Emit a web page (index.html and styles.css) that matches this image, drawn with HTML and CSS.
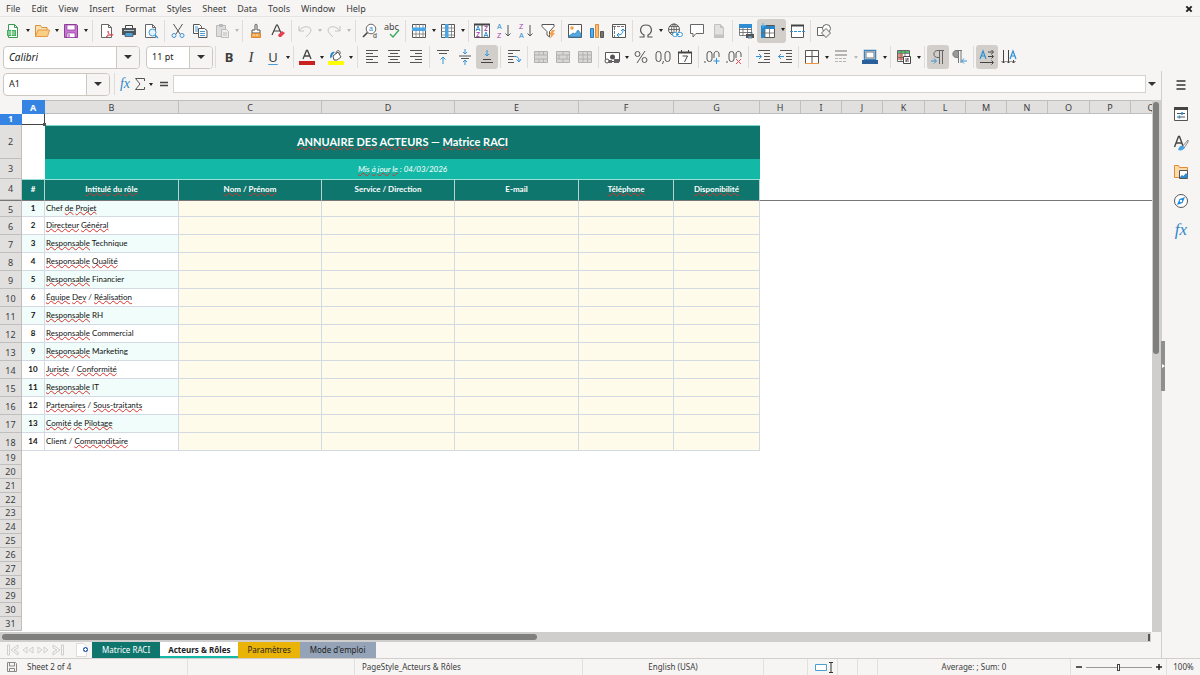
FILE: index.html
```html
<!DOCTYPE html>
<html lang="fr">
<head>
<meta charset="utf-8">
<title>Matrice RACI</title>
<link rel="stylesheet" href="styles.css">
</head>
<body>
<header class="menubar">
  <nav class="menus">
    <button>File</button><button>Edit</button><button>View</button><button>Insert</button><button>Format</button><button>Styles</button><button>Sheet</button><button>Data</button><button>Tools</button><button>Window</button><button>Help</button>
  </nav>
  <button class="close" aria-label="Close"><svg viewBox="0 0 6 6"><path d="M1 1l4 4M5 1L1 5" stroke="#222" stroke-width="1.5"/></svg></button>
</header>

<div class="toolbar standard">
  <button class="tool" aria-label="New"><svg viewBox="0 0 16 16"><path d="M3.5 1.5h6l3 3v10h-9z" fill="#fff" stroke="#3a9a52"/><path d="M9.500 1.500v3h3" stroke="#3a9a52"/><path d="M2 7h9v6H2z" fill="#43b05f"/><path d="M3 9h7M3 11h7M6.500 7v6" stroke="#fff" stroke-width=".7"/></svg></button><button class="arrow" aria-label="New options"></button>
  <button class="tool" aria-label="Open"><svg viewBox="0 0 16 16"><path d="M1.500 13.500v-11h5l1.500 2h5v3" fill="#fbe0b0" stroke="#d8913d"/><path d="M1.500 13.500l2.500-6.500h11.500l-2 6.500z" fill="#fbce85" stroke="#e39a42"/></svg></button><button class="arrow" aria-label="Open options"></button>
  <button class="tool" aria-label="Save"><svg viewBox="0 0 16 16"><path d="M1.500 1.500h12l1 1v12h-13z" fill="#c877d0" stroke="#8f3b9c"/><path d="M4 2h8v5H4zM4 10h8v4.500H4z" fill="#fff" stroke="#8f3b9c" stroke-width=".7"/><path d="M6 11v3" stroke="#8f3b9c"/></svg></button><button class="arrow" aria-label="Save options"></button>
  <i class="sep wide"></i>
  <button class="tool" aria-label="Export as PDF"><svg viewBox="0 0 16 16"><path d="M2.500 1.500h7l3 3v10h-10z" fill="#fff" stroke="#666"/><path d="M9.500 1.500v3h3" stroke="#666"/><path d="M7 14c3-2 3-6 2-6s1 5 5 4c1-1-4 0-7 2z" stroke="#dc3d4b" stroke-width=".9"/></svg></button>
  <button class="tool" aria-label="Print"><svg viewBox="0 0 16 16"><path d="M4.500 5V2.500h7V5" fill="#fff" stroke="#444"/><path d="M1 5h14v7H1z" fill="#555"/><path d="M3 7.500h10" stroke="#a9d1ed"/><path d="M4 9.500h8v4H4z" fill="#4d9fda" stroke="#444" stroke-width=".7"/></svg></button>
  <button class="tool" aria-label="Print preview"><svg viewBox="0 0 16 16"><path d="M2.500 1.500h7l3 3v10h-10z" fill="#fff" stroke="#666"/><path d="M9.500 1.500v3h3" stroke="#666"/><circle cx="9.500" cy="9.500" r="3.500" fill="#e6f3fc" stroke="#429bd8"/><path d="M12 12l3 3" stroke="#429bd8" stroke-width="1.400"/></svg></button>
  <i class="sep"></i>
  <button class="tool" aria-label="Cut"><svg viewBox="0 0 16 16"><path d="M3.500 1l6.500 10M12.500 1L6 11" stroke="#555"/><circle cx="4" cy="12.500" r="2" stroke="#3f93d5"/><circle cx="12" cy="12.500" r="2" stroke="#3f93d5"/></svg></button>
  <button class="tool" aria-label="Copy"><svg viewBox="0 0 16 16"><path d="M1.500 1.500h6l2 2v7h-8z" fill="#fff" stroke="#555"/><path d="M3 4h3M3 6h3M3 8h3" stroke="#4a9bd5"/><path d="M6.500 5.500h6l2.500 2v7H6.500z" fill="#fff" stroke="#555"/><path d="M8 8.500h5M8 10.500h5M8 12.500h5" stroke="#4a9bd5"/></svg></button>
  <button class="tool off" aria-label="Paste" disabled><svg viewBox="0 0 16 16"><path d="M2.500 2.500h9v11h-9z" fill="#ddd" stroke="#bbb"/><path d="M5 1h4v3H5z" fill="#bbb"/><path d="M7.500 6.500h5l2 2v6h-7z" fill="#eee" stroke="#bbb"/><path d="M9 10h4M9 12h4" stroke="#bbb"/></svg></button><button class="arrow off" aria-label="Paste options" disabled></button>
  <i class="sep"></i>
  <button class="tool" aria-label="Clone formatting"><svg viewBox="0 0 16 16"><path d="M7 7V2c0-1 2-1 2 0v5h3v3H4V7z" fill="#fff" stroke="#555"/><path d="M3.500 10.500h9v4h-9z" fill="#f6a651" stroke="#dc8733"/><path d="M6 11v2M9 11v2" stroke="#fff" stroke-width=".7"/></svg></button>
  <button class="tool" aria-label="Clear formatting"><svg viewBox="0 0 16 16"><path d="M2 12L6.500 2h1L11 10M4 8h6" stroke="#444" stroke-width="1.200"/><path d="M8 12l4-4 3 2-4 4H9z" fill="#e4404f"/></svg></button>
  <i class="sep"></i>
  <button class="tool off" aria-label="Undo" disabled><svg viewBox="0 0 16 16"><path d="M2 3v5h5M2 8c3-5 11-6 12-1 0 2-2 4-5 7" stroke="#c4c3c2"/></svg></button><button class="arrow off" aria-label="Undo options" disabled></button>
  <button class="tool off" aria-label="Redo" disabled><svg viewBox="0 0 16 16"><path d="M14 3v5H9M14 8C11 3 3 2 2 7c0 2 2 4 5 7" stroke="#c4c3c2"/></svg></button><button class="arrow off" aria-label="Redo options" disabled></button>
  <i class="sep wide"></i>
  <button class="tool" aria-label="Find and replace"><svg viewBox="0 0 16 16"><circle cx="9" cy="6" r="4.800" fill="#fff" stroke="#666"/><path d="M5.500 9.500L1 14" stroke="#444" stroke-width="1.600"/><text x="7" y="8" font-size="7" fill="#278bd1">a</text><text x="11" y="15" font-size="7" fill="#333">d</text></svg></button>
  <button class="tool" aria-label="Spelling"><svg class="spell" viewBox="0 0 16 16"><text x="0" y="7" font-size="9" fill="#444">abc</text><path d="M6 11l3 3 6-7" stroke="#35a85b" stroke-width="1.300"/></svg></button>
  <i class="sep"></i>
  <button class="tool" aria-label="Row"><svg viewBox="0 0 16 16"><path d="M1.500 1.500h13v13h-13z" fill="#fff" stroke="#555"/><path d="M1.500 11h13M5 1v14M8.500 1v14M12 1v14" stroke="#777" stroke-width=".8"/><path d="M1 4.500h14v3.500H1z" fill="#4ca5e5"/></svg></button><button class="arrow" aria-label="Row options"></button>
  <button class="tool" aria-label="Column"><svg viewBox="0 0 16 16"><path d="M1.500 1.500h13v13h-13z" fill="#fff" stroke="#555"/><path d="M1 5h14M1 8.500h14M1 12h14M11.500 1v14" stroke="#777" stroke-width=".8"/><path d="M5 1h3.500v14H5z" fill="#4ca5e5"/></svg></button><button class="arrow" aria-label="Column options"></button>
  <i class="sep"></i>
  <button class="tool" aria-label="Sort"><svg viewBox="0 0 16 16"><path d="M.5 1.500h15v13H.5zM8 1v14" fill="#fff" stroke="#555"/><path d="M0 1.500h16" stroke="#444" stroke-width="2"/><path d="M2 8l2-5 2 5M2.500 6.500h3M10 14l2-5 2 5M10.500 12.500h3" stroke="#258bd2" stroke-width=".9"/><path d="M2.500 9.500h3L2.500 13.500h3M10.500 3.500h3l-3 4h3" stroke="#a43aae" stroke-width=".9"/></svg></button>
  <button class="tool" aria-label="Sort ascending"><svg viewBox="0 0 16 16"><text x="1" y="6" font-size="7" fill="#258bd2">A</text><text x="1" y="15" font-size="7" fill="#a43aae">Z</text><path d="M12 2v11M9.500 10.500L12 13l2.500-2.500" stroke="#555"/></svg></button>
  <button class="tool" aria-label="Sort descending"><svg viewBox="0 0 16 16"><text x="1" y="6" font-size="7" fill="#a43aae">Z</text><text x="1" y="15" font-size="7" fill="#258bd2">A</text><path d="M12 2v11M9.500 10.500L12 13l2.500-2.500" stroke="#555"/></svg></button>
  <button class="tool" aria-label="AutoFilter"><svg viewBox="0 0 16 16"><path d="M2 1.500h12v2L9.500 8.500V14l-2.500-2V8.500L2 3.500z" fill="#fff" stroke="#555"/><path d="M12 7l-3 5h2l-1 4 5-6h-2l2-3z" fill="#f5a04a"/></svg></button>
  <i class="sep"></i>
  <button class="tool" aria-label="Insert image"><svg viewBox="0 0 16 16"><path d="M1.500 1.500h13v13h-13z" fill="#fff" stroke="#555"/><circle cx="5" cy="5" r="1.800" fill="#f4a151"/><path d="M2 13l4-3 2 1 3-4 3 4v3H2z" fill="#56a9df" stroke="#2f83bd" stroke-width=".8"/></svg></button>
  <button class="tool" aria-label="Insert chart"><svg viewBox="0 0 16 16"><path d="M1.500 5.500h3v9h-3z" fill="#5badea" stroke="#267dbd"/><path d="M6.500 1.500h3v13h-3z" fill="#f9bd76" stroke="#df8b36"/><path d="M11.500 8.500h3v6h-3z" fill="#777" stroke="#555"/></svg></button>
  <button class="tool" aria-label="Pivot table"><svg viewBox="0 0 16 16"><path d="M1.500 1.500h13v13h-13z" fill="#fff" stroke="#555"/><path d="M2 3.500h12M3.500 4v10" stroke="#777" stroke-dasharray="3 1"/><path d="M6 12c5 0 6-2 6-6M10 8l2-2 2 2M8 10l-2 2 2 2" stroke="#298fd4"/></svg></button>
  <i class="sep"></i>
  <button class="tool" aria-label="Special character"><svg viewBox="0 0 16 16"><path d="M1.500 14h4.500v-2C.5 9 2 2 8 2s7.500 7 2 10v2h4.500" stroke="#555" stroke-width="1.200"/></svg></button><button class="arrow" aria-label="Special character options"></button>
  <button class="tool" aria-label="Hyperlink"><svg viewBox="0 0 16 16"><circle cx="7" cy="6.500" r="5.500" stroke="#555"/><path d="M1.500 6.500h11M7 1v11M2.500 3.500h9M2.500 9.500h5" stroke="#555" stroke-width=".8"/><ellipse cx="7" cy="6.500" rx="2.500" ry="5.500" stroke="#555" stroke-width=".8"/><rect x="5.500" y="9.500" width="5" height="4" rx="2" fill="#fff" stroke="#389ade"/><rect x="10" y="9.500" width="5.500" height="4" rx="2" fill="#fff" stroke="#389ade"/><path d="M9 11.500h3" stroke="#389ade"/></svg></button>
  <button class="tool" aria-label="Comment"><svg viewBox="0 0 16 16"><path d="M1.500 1.500h13v9H7l-3 3.500v-3.500H1.500z" fill="#fff" stroke="#666"/></svg></button>
  <button class="tool off" aria-label="Headers and footers" disabled><svg viewBox="0 0 16 16"><path d="M3.500 1.500h6l3 3v10h-9z" fill="#e2e1e0" stroke="#c2c1c0"/><path d="M3.500 12h9v2.500h-9zM9.500 1.500v3h3" fill="#c5c4c3" stroke="#c2c1c0"/></svg></button>
  <i class="sep"></i>
  <button class="tool" aria-label="Print area"><svg viewBox="0 0 16 16"><path d="M1.500 1.500h12v11h-12z" fill="#fff" stroke="#666" stroke-width=".8"/><path d="M1 6.500h13M1 9.500h13M5 1v12M9.500 1v12" stroke="#666" stroke-width=".8"/><path d="M1 1h13v4H1z" fill="#2f8ed3"/><path d="M8 11h8v4H8z" fill="#555"/><path d="M10 9.500h4V11M10 13h4v2h-4z" fill="#78b9e8" stroke="#555" stroke-width=".7"/></svg></button>
  <span class="split on"><button class="tool" aria-label="Freeze rows and columns"><svg viewBox="0 0 16 16"><path d="M1.500 2.500h13v12h-13z" fill="#fff" stroke="#555"/><path d="M1 3h14v3H1zM1 3h4v12H1z" fill="#2588cf"/><path d="M5 6v9M9.500 3v12M1 10h14" stroke="#666" stroke-width=".8"/><path d="M3 0v5M1 2.500h5" stroke="#55afee"/></svg></button><button class="arrow" aria-label="Freeze options"></button></span>
  <button class="tool" aria-label="Split window"><svg viewBox="0 0 16 16"><path d="M2.500 2.500h12v12h-12z" fill="#fff" stroke="#555"/><path d="M2 2.500h13" stroke="#444" stroke-width="2"/><path d="M1 8.500h15" stroke="#308fd2" stroke-dasharray="3 1"/></svg></button>
  <i class="sep"></i>
  <button class="tool" aria-label="Draw functions"><svg viewBox="0 0 16 16"><path d="M1.500 4.500h8v8h-8z" fill="#fff" stroke="#666"/><circle cx="10.500" cy="5.500" r="4" fill="#fff" stroke="#666"/><path d="M10 5.500l4.500 4.500-4.500 4.500-4.500-4.500z" fill="#f2f1f0" stroke="#666"/></svg></button>
</div>

<div class="toolbar formatting">
  <div class="combo font"><input value="Calibri" aria-label="Font name"><button aria-label="Font list"></button></div>
  <div class="combo size"><input value="11 pt" aria-label="Font size"><button aria-label="Size list"></button></div>
  <i class="sep"></i>
  <button class="tool letter b">B</button><button class="tool letter i">I</button><button class="tool letter u">U</button><button class="arrow" aria-label="Underline options"></button>
  <i class="sep"></i>
  <button class="tool" aria-label="Font color"><svg viewBox="0 0 16 16"><path d="M4 10L7.500 1.500h1L12 10M5 7h6" stroke="#444" stroke-width="1.300"/><path d="M0 12h16v4H0z" fill="#c9211e"/></svg></button><button class="arrow" aria-label="Font color options"></button>
  <button class="tool" aria-label="Background color"><svg viewBox="0 0 16 16"><path d="M5 7l5-4 3 5-4 3H6z" fill="#fff" stroke="#555"/><path d="M8 5c0-5 5-4 4 0" stroke="#555"/><path d="M7 3C4 2 2 4 2 9c2 0 2-2 3-4z" fill="#2588cf"/><path d="M0 12h16v4H0z" fill="#ff0"/></svg></button><button class="arrow" aria-label="Background options"></button>
  <i class="sep wide"></i>
  <button class="tool" aria-label="Align left"><svg viewBox="0 0 16 16"><path d="M2 1.500h12M2 4.500h7M2 7.500h12M2 10.500h7M2 13.500h12" stroke="#555"/></svg></button>
  <button class="tool" aria-label="Center"><svg viewBox="0 0 16 16"><path d="M2 1.500h12M4 4.500h8M2 7.500h12M4 10.500h8M2 13.500h12" stroke="#555"/></svg></button>
  <button class="tool" aria-label="Align right"><svg viewBox="0 0 16 16"><path d="M2 1.500h12M7 4.500h7M2 7.500h12M7 10.500h7M2 13.500h12" stroke="#555"/></svg></button>
  <i class="sep"></i>
  <button class="tool" aria-label="Align top"><svg viewBox="0 0 16 16"><path d="M2 1.500h12M4 4.500h8" stroke="#555"/><path d="M8 15V8M5.500 10.500L8 8l2.500 2.500" stroke="#3593d6"/></svg></button>
  <button class="tool" aria-label="Center vertically"><svg viewBox="0 0 16 16"><path d="M2 7h12M4 9.500h8" stroke="#555"/><path d="M8 0v5M6 3l2 2 2-2M8 16v-5M6 13l2-2 2 2" stroke="#3593d6"/></svg></button>
  <button class="tool on" aria-label="Align bottom"><svg viewBox="0 0 16 16"><path d="M4 10.500h8M2 13.500h12" stroke="#444"/><path d="M8 1v6M6 5l2 2 2-2" stroke="#3593d6"/></svg></button>
  <i class="sep"></i>
  <button class="tool" aria-label="Wrap text"><svg viewBox="0 0 16 16"><path d="M2 1.500h12M2 4.500h5M2 7.500h8M2 10.500h5M2 13.500h6" stroke="#555"/><path d="M8 7.500c4 0 5 1 5 5M10.500 10.500l2.500 2.500 2-3" stroke="#3593d6"/></svg></button>
  <i class="sep"></i>
  <button class="tool off" aria-label="Merge and center" disabled><svg viewBox="0 0 16 16"><path d="M1.500 2.500h13v11h-13zM1 6h14M1 10h14M6 2v4M10.500 2v4M6 10v4M10.500 10v4" fill="#d8d7d6" stroke="#b2b1b0"/></svg></button>
  <button class="tool off" aria-label="Merge cells" disabled><svg viewBox="0 0 16 16"><path d="M1.500 2.500h13v11h-13zM1 6h14M1 10h14M8 2v4M8 10v4M4 6v4M12 6v4" fill="#d8d7d6" stroke="#b2b1b0"/></svg></button>
  <button class="tool off" aria-label="Split cells" disabled><svg viewBox="0 0 16 16"><path d="M1.500 2.500h13v11h-13zM1 6h14M1 10h14M6 2v12M10.500 2v12" fill="#d8d7d6" stroke="#b2b1b0"/></svg></button>
  <i class="sep"></i>
  <button class="tool" aria-label="Currency"><svg viewBox="0 0 16 16"><path d="M1.500 3.500h14v9h-14z" fill="#fff" stroke="#555"/><circle cx="8.500" cy="8" r="2.500" fill="#555"/><path d="M10 10h5v4h-5zM4 11h4v3H4z" fill="#666"/><circle cx="3" cy="12" r="2" fill="#fff" stroke="#555"/></svg></button><button class="arrow" aria-label="Currency options"></button>
  <button class="tool" aria-label="Percent"><svg viewBox="0 0 16 16"><circle cx="4.500" cy="5" r="2.500" stroke="#555"/><circle cx="11.500" cy="11" r="2.500" stroke="#555"/><path d="M12 2L4 14" stroke="#555"/></svg></button>
  <button class="tool" aria-label="Number"><svg viewBox="0 0 16 16"><rect x="1" y="2.500" width="5" height="10" rx="2.500" stroke="#555"/><rect x="10" y="2.500" width="5" height="10" rx="2.500" stroke="#555"/><path d="M8.500 12l-1 3" stroke="#555"/></svg></button>
  <button class="tool" aria-label="Date"><svg viewBox="0 0 16 16"><path d="M1.500 3.500h13v11h-13z" fill="#fff" stroke="#555"/><path d="M1 3.500h14" stroke="#444" stroke-width="2"/><path d="M4.500 1v2M11.500 1v2M5.500 7h5l-3 6" stroke="#444"/></svg></button>
  <i class="sep"></i>
  <button class="tool" aria-label="Add decimal place"><svg viewBox="0 0 16 16"><path d="M1 12v2" stroke="#555"/><rect x="3" y="2.500" width="5" height="10" rx="2.500" stroke="#555"/><path d="M10 9V5c0-3.500 5-3.500 5 0v3" stroke="#555"/><path d="M12.500 9v6M9.500 12h6" stroke="#298fd4"/></svg></button>
  <button class="tool" aria-label="Delete decimal place"><svg viewBox="0 0 16 16"><path d="M1 12v2" stroke="#555"/><rect x="3" y="2.500" width="5" height="10" rx="2.500" stroke="#555"/><path d="M10 9V5c0-3.500 5-3.500 5 0v3" stroke="#555"/><path d="M10 10l5 5M15 10l-5 5" stroke="#e74856"/></svg></button>
  <i class="sep wide"></i>
  <button class="tool" aria-label="Increase indent"><svg viewBox="0 0 16 16"><path d="M3 1.500h12M9 4.500h6M9 7.500h6M9 10.500h6M3 13.500h12" stroke="#555"/><path d="M1 7.500h5M4 5l2.500 2.500L4 10" stroke="#3593d6"/></svg></button>
  <button class="tool" aria-label="Decrease indent"><svg viewBox="0 0 16 16"><path d="M3 1.500h12M9 4.500h6M9 7.500h6M9 10.500h6M3 13.500h12" stroke="#555"/><path d="M1.500 7.500H7M4 5L1.500 7.500 4 10" stroke="#3593d6"/></svg></button>
  <i class="sep"></i>
  <button class="tool" aria-label="Borders"><svg viewBox="0 0 16 16"><path d="M1.500 14V1.500h13V14M8 2v12M2 7.500h12" fill="#fff" stroke="#555"/><path d="M1 14.500h14" stroke="#e99545"/></svg></button><button class="arrow" aria-label="Border options"></button>
  <button class="tool off" aria-label="Border style" disabled><svg viewBox="0 0 16 16"><path d="M2 2h12M2 6h12" stroke="#b5b4b3" stroke-width="2"/><path d="M2 9.500h12M2 12.500h12" stroke="#b5b4b3" stroke-dasharray="3 1"/></svg></button><button class="arrow off" aria-label="Border style options" disabled></button>
  <button class="tool" aria-label="Border color"><svg viewBox="0 0 16 16"><path d="M2.500 1.500h11v9h-11z" fill="#fff" stroke="#3d84bf" stroke-width="1.500"/><path d="M4 3h8v6H4z" stroke="#777"/><path d="M0 11h16v4H0z" fill="#2a6099"/></svg></button><button class="arrow" aria-label="Border color options"></button>
  <i class="sep"></i>
  <button class="tool" aria-label="Conditional formatting"><svg viewBox="0 0 16 16"><path d="M1.500 1.500h12v11h-12z" fill="#fff" stroke="#666"/><path d="M2 2h11v2H2z" fill="#53bc6d"/><path d="M2 5h5v6H2z" fill="#ef8b7a"/><path d="M1 4.500h13M1 8.500h13M5 1v12M9 1v6" stroke="#666" stroke-width=".8"/><path d="M7.500 7.500h7v7h-7z" fill="#fff" stroke="#444"/><path d="M9 10h4M9 12h4M12 9l-2 4" stroke="#444" stroke-width=".8"/></svg></button><button class="arrow" aria-label="Conditional options"></button>
  <i class="sep"></i>
  <button class="tool on" aria-label="Left-to-right"><svg viewBox="0 0 16 16"><path d="M14 1.500H8a3.500 3 0 0 0 0 7h1M9.500 2v13M12.500 2v13" stroke="#666"/><path d="M1 12h5M4 9.500L6.500 12 4 14.500" stroke="#3593d6"/></svg></button>
  <button class="tool" aria-label="Right-to-left"><svg viewBox="0 0 16 16"><path d="M6 1.500H5a3.500 3 0 0 0 0 7h1z" fill="#999"/><path d="M10 1.500H5a3.500 3 0 0 0 0 7h1M6.500 2v12M9 2v12" stroke="#777"/><path d="M15 12h-5M12 9.500L9.500 12l2.500 2.500" stroke="#3593d6"/></svg></button>
  <i class="sep"></i>
  <button class="tool on" aria-label="Text left to right"><svg viewBox="0 0 16 16"><path d="M1 10L4 2l3 8M2 7h4" stroke="#298fd4" stroke-width="1.200"/><path d="M9 3h5M9 7.500h5M1 13.500h13M12.500 1l2 2-2 2M12.500 5.500l2 2-2 2M12.500 11.500l2 2-2 2" stroke="#444"/></svg></button>
  <button class="tool" aria-label="Text top to bottom"><svg viewBox="0 0 16 16"><path d="M9 10l3-8 3 8M10 7h4" stroke="#298fd4" stroke-width="1.200"/><path d="M2.500 1v13M7.500 1v13M12.500 11v3M.5 12l2 2 2-2M5.500 12l2 2 2-2M10.500 12l2 2 2-2" stroke="#444"/></svg></button>
</div>

<div class="workspace">
  <main class="document">
    <div class="formula">
      <div class="combo name"><input value="A1" aria-label="Name box"><button aria-label="Name list"></button></div>
      <i class="sep"></i>
      <button class="fx" aria-label="Function wizard">fx</button>
      <button class="mini" aria-label="Sum"><svg viewBox="0 0 12 14"><path d="M10.500 4V1.500h-9L6 7l-4.500 5.500h9V10" stroke="#555"/></svg></button>
      <button class="arrow" aria-label="Function list"></button>
      <button class="mini eq" aria-label="Formula"><svg viewBox="0 0 12 14"><path d="M2 5.500h8M2 8.500h8" stroke="#444" stroke-width="1.300"/></svg></button>
      <input class="formula-input" aria-label="Input line">
      <button class="expand" aria-label="Expand formula bar"></button>
    </div>
    <div class="sheet">
      <div class="cells">
        <table>
          <colgroup><col class="c-head"><col class="c-a"><col class="c-b"><col class="c-c"><col class="c-d"><col class="c-e"><col class="c-f"><col class="c-g"><col class="c-n" span="3"><col class="c-w"><col class="c-n" span="3"><col class="c-w"><col class="c-n" span="2"></colgroup>
          <thead><tr class="heads"><td class="corner"></td><th class="sel">A</th><th>B</th><th>C</th><th>D</th><th>E</th><th>F</th><th>G</th><th>H</th><th>I</th><th>J</th><th>K</th><th>L</th><th>M</th><th>N</th><th>O</th><th>P</th><th>Q</th></tr></thead>
          <tbody>
            <tr class="r1"><th class="sel">1</th><td class="cursor"></td><td colspan="16"></td></tr>
            <tr class="r2"><th>2</th><td></td><td class="title" colspan="6"><u>ANNUAIRE</u> <u>DES</u> <u>ACTEURS</u> — <u>Matrice</u> <u>RACI</u></td></tr>
            <tr class="r3"><th>3</th><td></td><td class="subtitle" colspan="6"><u>Mis</u> <u>à</u> <u>jour</u> <u>le</u> : 04/03/2026</td></tr>
            <tr class="r4"><th>4</th><td>#</td><td><u>Intitulé</u> <u>du</u> <u>rôle</u></td><td><u>Nom</u> / <u>Prénom</u></td><td>Service / Direction</td><td>E-mail</td><td><u>Téléphone</u></td><td><u>Disponibilité</u></td></tr>
          </tbody>
          <tbody class="roles">
            <tr><th>5</th><td>1</td><td>Chef <u>de</u> <u>Projet</u></td><td></td><td></td><td></td><td></td><td></td><td colspan="10"></td></tr>
            <tr><th>6</th><td>2</td><td><u>Directeur</u> <u>Général</u></td><td></td><td></td><td></td><td></td><td></td></tr>
            <tr><th>7</th><td>3</td><td><u>Responsable</u> Technique</td><td></td><td></td><td></td><td></td><td></td></tr>
            <tr><th>8</th><td>4</td><td><u>Responsable</u> <u>Qualité</u></td><td></td><td></td><td></td><td></td><td></td></tr>
            <tr><th>9</th><td>5</td><td><u>Responsable</u> Financier</td><td></td><td></td><td></td><td></td><td></td></tr>
            <tr><th>10</th><td>6</td><td><u>Équipe</u> <u>Dev</u> / <u>Réalisation</u></td><td></td><td></td><td></td><td></td><td></td></tr>
            <tr><th>11</th><td>7</td><td><u>Responsable</u> RH</td><td></td><td></td><td></td><td></td><td></td></tr>
            <tr><th>12</th><td>8</td><td><u>Responsable</u> Commercial</td><td></td><td></td><td></td><td></td><td></td></tr>
            <tr><th>13</th><td>9</td><td><u>Responsable</u> Marketing</td><td></td><td></td><td></td><td></td><td></td></tr>
            <tr><th>14</th><td>10</td><td><u>Juriste</u> / <u>Conformité</u></td><td></td><td></td><td></td><td></td><td></td></tr>
            <tr><th>15</th><td>11</td><td><u>Responsable</u> IT</td><td></td><td></td><td></td><td></td><td></td></tr>
            <tr><th>16</th><td>12</td><td><u>Partenaires</u> / <u>Sous-traitants</u></td><td></td><td></td><td></td><td></td><td></td></tr>
            <tr><th>17</th><td>13</td><td><u>Comité</u> <u>de</u> <u>Pilotage</u></td><td></td><td></td><td></td><td></td><td></td></tr>
            <tr><th>18</th><td>14</td><td>Client / <u>Commanditaire</u></td><td></td><td></td><td></td><td></td><td></td></tr>
          </tbody>
          <tbody class="empty">
            <tr><th>19</th></tr><tr><th>20</th></tr><tr><th>21</th></tr><tr><th>22</th></tr><tr><th>23</th></tr><tr><th>24</th></tr><tr><th>25</th></tr><tr><th>26</th></tr><tr><th>27</th></tr><tr><th>28</th></tr><tr><th>29</th></tr><tr><th>30</th></tr><tr><th>31</th></tr>
          </tbody>
        </table>
      </div>
      <div class="vscroll"><div class="thumb"></div></div>
    </div>
    <div class="hscroll"><div class="track"><div class="thumb"></div><i class="grip"></i></div></div>
    <div class="tabs">
      <div class="tabnav">
        <button aria-label="First sheet"><svg viewBox="0 0 14 12"><path d="M1.500 1v10h2V1zM12 1L5 6l7 5V8L8 6l4-2z" stroke="#c6c5c4" stroke-width=".8"/></svg></button>
        <button aria-label="Previous sheet"><svg viewBox="0 0 14 12"><path d="M6 3L2 6l4 3zM12 3L8 6l4 3z" stroke="#c6c5c4" stroke-width=".8"/></svg></button>
        <button aria-label="Next sheet"><svg viewBox="0 0 14 12"><path d="M2 3l4 3-4 3zM8 3l4 3-4 3z" stroke="#c6c5c4" stroke-width=".8"/></svg></button>
        <button aria-label="Last sheet"><svg viewBox="0 0 14 12"><path d="M12.500 1v10h-2V1zM2 1l7 5-7 5V8l4-2-4-2z" stroke="#c6c5c4" stroke-width=".8"/></svg></button>
      </div>
      <button class="add" aria-label="Add sheet"><svg viewBox="0 0 14 16"><path d="M1.500 1.500h7l3 3v10h-10z" fill="#fff" stroke="#dddcdb"/><circle cx="10.500" cy="7.500" r="2.500" fill="#3465b4"/><path d="M10.500 6v3M9 7.500h3" stroke="#fff"/></svg></button>
      <button class="tab teal">Matrice RACI</button><button class="tab current">Acteurs &amp; Rôles</button><button class="tab gold">Paramètres</button><button class="tab slate">Mode d'emploi</button>
    </div>
  </main>
  <aside class="sidebar">
    <button aria-label="Sidebar settings"><svg viewBox="0 0 16 16"><path d="M3.500 4h9M3.500 8h9M3.500 12h9" stroke="#333" stroke-width="1.400"/></svg></button>
    <button aria-label="Properties"><svg viewBox="0 0 16 16"><path d="M1.500 2.500h13v12h-13z" fill="#fff" stroke="#555"/><path d="M1 2.500h14" stroke="#444" stroke-width="3"/><path d="M4 7.500h8M4 11h8" stroke="#555"/><path d="M9 6v3M6.500 9.500v3" stroke="#2b93dc" stroke-width="1.500"/></svg></button>
    <button aria-label="Styles"><svg viewBox="0 0 16 16"><path d="M1.500 12L5.500 1.500h1L10 11M3 8h6" stroke="#444" stroke-width="1.400"/><path d="M15 5l-6 7 2 1 4-6z" fill="#fff" stroke="#666" stroke-width=".8"/><path d="M10 11c-2-1-4 0-5 4 3 1 6 0 7-3z" fill="#4aa2e2"/></svg></button>
    <button aria-label="Gallery"><svg viewBox="0 0 16 16"><path d="M1.500 13.500v-12h4l1 2h8v10z" fill="#fbdca8" stroke="#e28b35"/><path d="M6.500 6.500h8v8h-8z" fill="#fff" stroke="#555"/><path d="M7 13l2-2 1.500 1L13 9l1.500 2v3H7z" fill="#318bcb"/></svg></button>
    <button aria-label="Navigator"><svg viewBox="0 0 16 16"><circle cx="8" cy="8" r="6.500" fill="#fff" stroke="#555"/><path d="M12 4l-2.500 6L4 12l2.500-6z" fill="#218ada"/><circle cx="8" cy="8" r="1.200" fill="#fff"/></svg></button>
    <button class="fx big" aria-label="Functions">fx</button>
    <button class="handle" aria-label="Hide sidebar"></button>
  </aside>
</div>

<footer class="status">
  <div class="count"><svg viewBox="0 0 12 12"><path d="M1.500 1.500h8l1 1v8h-9zM3.500 2v3h5V2M3.500 10V7.500h5V10" stroke="#888"/></svg><span>Sheet 2 of 4</span></div>
  <div></div>
  <div class="page">PageStyle_Acteurs &amp; Rôles</div>
  <div class="mid">English (USA)</div>
  <div></div>
  <div class="mode"><svg viewBox="0 0 22 12"><path d="M1.500 3.500h11v6h-11z" fill="#fff" stroke="#4a9fd0"/><path d="M15 1.500h4M17 1.500v10M15 11.500h4" stroke="#333"/></svg></div>
  <div></div>
  <div></div>
  <div class="mid">Average: ; Sum: 0</div>
  <div class="zoom"><button aria-label="Zoom out"><svg viewBox="0 0 8 8"><path d="M1 4h6" stroke="#222" stroke-width="1.500"/></svg></button><input type="range" min="0" max="100" value="50" aria-label="Zoom"><button aria-label="Zoom in"><svg viewBox="0 0 8 8"><path d="M1 4h6M4 1v6" stroke="#222" stroke-width="1.500"/></svg></button></div>
  <div class="mid">100%</div>
</footer>
</body>
</html>
```
FILE: styles.css
```css
* { box-sizing: border-box; }
html, body { height: 100%; }
body {
  margin: 0;
  display: flex;
  flex-direction: column;
  overflow: hidden;
  background: #f6f5f4;
  color: #3c3c3c;
  font: 9px/12px "Noto Sans", sans-serif;
}
button, input { font: inherit; color: inherit; margin: 0; padding: 0; }
button { border: 0; background: none; display: flex; align-items: center; justify-content: center; flex: none; }
svg { display: block; fill: none; flex: none; overflow: visible; }
svg text { font-family: "Liberation Sans", sans-serif; }
.spell text { font-family: "Noto Sans", sans-serif; }

.menubar { display: flex; justify-content: space-between; height: 17px; border-bottom: 1px solid #e6e5e4; padding: 1px 6px 0; flex: none; }
.menus { display: flex; gap: 11px; }
.close svg { width: 8px; height: 8px; }
.close { width: 10px; }

.toolbar { display: flex; align-items: center; flex: none; padding-left: 2px; }
.standard { height: 27px; }
.formatting { height: 27px; padding-bottom: 1px; }
.tool { width: 22px; height: 24px; border-radius: 3px; }
.tool svg { width: 16px; height: 16px; }
.on { background: #d2cfcb; border-radius: 3px; }
.split { display: flex; }
.arrow { width: 7px; height: 22px; }
.arrow::after { content: ""; border: 2px solid transparent; border-top: 3px solid #222; border-bottom: 0; }
.arrow.off::after { border-top-color: #bbb; }
.sep { width: 5px; height: 22px; flex: none; background: linear-gradient(#dedddc, #dedddc) center / 1px 100% no-repeat; }
.sep.wide { width: 7px; }
.letter { font-size: 13px; }
.b { font-weight: bold; }
.i { font-family: "Liberation Serif", serif; font-style: italic; font-size: 15px; }
.u { text-decoration: underline #4a9bd5; text-underline-offset: 2px; }

.combo { display: flex; height: 23px; border: 1px solid #cdc7c2; border-radius: 4px; background: #fff; overflow: hidden; flex: none; }
.combo input { flex: 1; min-width: 0; border: 0; background: none; padding-left: 5px; font-size: 9px; color: #222; }
.combo button { width: 23px; border-left: 1px solid #cdc7c2; background: #f6f5f4; }
.combo button::after, .expand::after { content: ""; border: 4px solid transparent; border-top-color: #333; border-bottom: 0; }
.font { width: 137px; margin: 0 6px 0 1px; }
.font input { font-style: italic; font-size: 10px; }
.size { width: 67px; }
.name { width: 107px; margin-right: 2px; }

.workspace { display: flex; flex: 1; min-height: 0; }
.document { display: flex; flex-direction: column; flex: 1; min-width: 0; border-right: 1px solid #cfcecd; }
.formula { display: flex; align-items: center; height: 29px; padding: 0 3px 3px; flex: none; }
.fx { font: italic 14px/16px "Liberation Serif", serif; color: #3087c8; width: 16px; }
.mini { width: 14px; }
.mini svg { width: 12px; height: 14px; }
.eq { width: 19px; }
.formula-input { flex: 1; min-width: 0; height: 18px; border: 1px solid #d5d3d1; background: #fff; }
.expand { width: 12px; }

.sheet { display: flex; flex: 1; min-height: 0; }
.cells { flex: 1; min-width: 0; overflow: hidden; background: #fff; }
table { width: 1172px; table-layout: fixed; border-collapse: separate; border-spacing: 0; line-height: 10px; }
td, th { padding: 0; white-space: nowrap; }
.c-head { width: 22px; }
.c-a { width: 23px; }
.c-b { width: 134px; }
.c-c { width: 143px; }
.c-d { width: 133px; }
.c-e { width: 124px; }
.c-f { width: 95px; }
.c-g { width: 86px; }
.c-n { width: 41px; }
.c-w { width: 42px; }
th { font-weight: normal; background: #e1e0df; border-right: 1px solid #c0bfbe; border-bottom: 1px solid #c0bfbe; }
.heads { height: 14px; }
.heads th { border-top: 1px solid #c0bfbe; padding-top: 1px; }
.corner { background: #f6f5f4; }
th.sel { background: #3584e4; color: #fff; font-weight: bold; border-color: #3584e4; }
.r1 { height: 11px; }
.r2 { height: 34px; }
.r3 { height: 20px; }
.r4 { height: 21px; }
.cursor { position: relative; border-right: 1px solid #444; border-bottom: 1px solid #444; }
.cursor::after { content: ""; position: absolute; right: -2px; bottom: -2px; width: 3px; height: 3px; background: #555; }
u { text-decoration: underline wavy #d8322f 1px; text-underline-offset: 0; text-decoration-skip-ink: none; }
.r2 td, .r3 td, .r4 td, .roles td { font-family: Lato, sans-serif; }
.title { background: #0f766e; color: #fff; text-align: center; font-size: 11px; font-weight: bold; border-top: 1px solid #7fd8d0; padding-bottom: 2px; }
.subtitle { background: #14b8a6; color: #fff; text-align: center; font-size: 8px; font-style: italic; }
.r4 td { background: #0f766e; color: #fff; text-align: center; font-size: 8px; font-weight: bold; border-top: 1px solid #99e0d9; border-right: 1px solid #b5d5d2; padding-bottom: 3px; }
.roles tr { height: 18px; }
.roles th { padding-top: 2px; }
.roles td { font-size: 8px; color: #111; border-right: 1px solid #d3dae3; border-bottom: 1px solid #d3dae3; background: #fffbeb; padding-bottom: 1px; }
.roles td:nth-child(2) { background: #fff; text-align: center; font-weight: bold; }
.roles td:nth-child(3) { background: #fff; padding-left: 1px; }
.roles tr:nth-child(odd) td:nth-child(2), .roles tr:nth-child(odd) td:nth-child(3) { background: #f0fdfa; }
.roles tr:first-child { height: 17px; }
.roles tr:first-child > * { border-top: 1px solid #777; }
.roles td:nth-child(9) { background: #fff; border-right: 0; border-bottom: 0; }
.empty tr { height: 14px; }
.empty tr:nth-child(5n) { height: 13px; }

.vscroll { width: 9px; background: #cfcecd; padding: 2px 2px 0 1px; flex: none; }
.vscroll .thumb { width: 6px; height: 47.6%; border-radius: 3px; background: #7f7f7e; }
.hscroll { height: 10px; padding-right: 10px; flex: none; }
.track { display: flex; justify-content: space-between; align-items: center; height: 10px; padding: 0 1px 0 2px; background: #cfcecd; }
.hscroll .thumb { width: 46.6%; height: 6px; border-radius: 3px; background: #7f7f7e; }
.grip { width: 2px; height: 7px; background: #555; }

.tabs { display: flex; height: 16px; flex: none; padding-left: 5px; }
.tabnav { display: flex; width: 66px; }
.tabnav button { width: 15px; }
.tabnav svg { width: 14px; height: 12px; }
.add { width: 21px; }
.add svg { width: 14px; height: 16px; }
.tab { padding: 0 10px; font-size: 8px; color: #222; }
.teal { background: #0f766e; color: #fff; }
.current { background: #fff; font-weight: bold; border-bottom: 2px solid #14b8a6; padding: 2px 8px 0; }
.gold { background: #eab308; padding: 0 9px; }
.slate { background: #94a3b8; }

.sidebar { position: relative; width: 38px; display: flex; flex-direction: column; align-items: center; gap: 5px; padding: 2px 0 0; flex: none; }
.sidebar button { width: 24px; height: 24px; }
.sidebar svg { width: 16px; height: 16px; }
.sidebar .fx.big { font-size: 17px; }
.sidebar .handle { position: absolute; left: -1px; top: 46%; width: 4px; height: 50px; background: #8f8f8e; }
.handle::after { content: ""; border: 2px solid transparent; border-left: 3px solid #fff; border-right: 0; }

.status { display: grid; grid-template-columns: 188px 167px 228fr 181fr 44px 30px 20px 20px 193fr 96px 33px; height: 17px; border-top: 1px solid #d0cfce; flex: none; font-size: 8px; }
.status > div { display: flex; align-items: center; border-right: 1px solid #e2e1e0; white-space: nowrap; }
.status > div:last-child { border: 0; }
.status .mid { justify-content: center; }
.count { padding-left: 6px; gap: 9px; }
.count svg { width: 12px; height: 12px; }
.page { padding-left: 7px; }
.mode { padding-left: 6px; }
.mode svg { width: 22px; height: 12px; }
.status .zoom { justify-content: center; gap: 2px; }
.zoom button { width: 10px; }
.zoom svg { width: 8px; height: 8px; }
input[type="range"] { appearance: none; width: 66px; height: 10px; background: linear-gradient(#999, #999) center / 100% 1px no-repeat; }
input[type="range"]::-webkit-slider-thumb { appearance: none; width: 3px; height: 7px; border: 1px solid #444; background: #fff; }
```
